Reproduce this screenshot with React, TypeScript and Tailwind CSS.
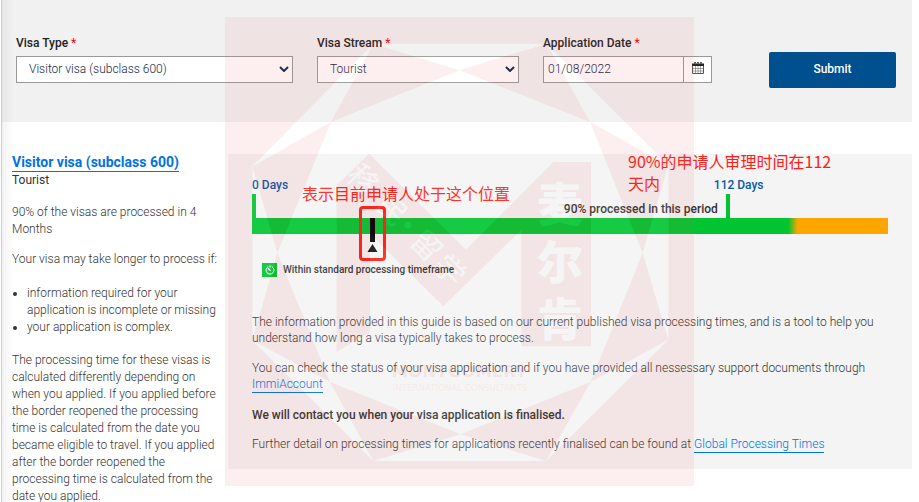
import React, { useState } from 'react';

const PROCESSED_PERCENT = 74.5;
const CURRENT_PERCENT = 18.5;

interface FieldLabelProps {
    htmlFor: string;
    children: React.ReactNode;
}

function FieldLabel({ htmlFor, children }: FieldLabelProps) {
    return (
        <label htmlFor={htmlFor} className="mb-[5px] block h-4 text-xs leading-4 font-medium text-[#222]">
            {children} <span className="font-normal text-[#f00]">*</span>
        </label>
    );
}

interface SelectFieldProps {
    id: string;
    label: string;
    options: string[];
}

function SelectField({ id, label, options }: SelectFieldProps) {
    const [value, setValue] = useState(options[0]);

    return (
        <div className="min-w-0">
            <FieldLabel htmlFor={id}>{label}</FieldLabel>
            <div className="relative">
                <select
                    id={id}
                    value={value}
                    onChange={(e) => setValue(e.target.value)}
                    className="block h-[27px] w-full appearance-none border border-[#999] bg-white pr-6 pb-px pl-3 text-xs font-light text-[#14284b]"
                >
                    {options.map((option) => (
                        <option key={option}>{option}</option>
                    ))}
                </select>
                <svg viewBox="0 0 10 6" className="pointer-events-none absolute top-[10px] right-1 h-[6px] w-[10px]">
                    <path d="M1 1l4 4 4-4" fill="none" stroke="#14284b" strokeWidth="2" />
                </svg>
            </div>
        </div>
    );
}

function CalendarIcon() {
    return (
        <svg viewBox="0 0 12 12" className="h-3 w-3" fill="none" stroke="#555">
            <path d="M.5 3.5h11v8H.5z" fill="#fff" />
            <path d="M0 1.5h12v2.5H0z" fill="#222" stroke="none" />
            <path d="M3 0v2.5M6 0v2.5M9 0v2.5" stroke="#222" strokeWidth="1.6" />
            <path d="M3 .6v1.6M6 .6v1.6M9 .6v1.6" stroke="#fff" strokeWidth=".5" />
            <path d="M3.5 4v7.5M6 4v7.5M8.5 4v7.5M.5 6.5h11M.5 9h11" strokeWidth=".5" />
        </svg>
    );
}

function ProcessingForm() {
    const [date, setDate] = useState('01/08/2022');

    return (
        <form
            className="grid h-[122px] grid-cols-[277fr_202fr_169fr_160fr] items-start gap-6 bg-[#f1f1f1] pt-[35px] pr-4 pl-[15px]"
            onSubmit={(e) => e.preventDefault()}
        >
            <SelectField id="visa-type" label="Visa Type" options={['Visitor visa (subclass 600)', 'Student visa (subclass 500)']} />
            <SelectField id="visa-stream" label="Visa Stream" options={['Tourist', 'Business Visitor']} />
            <div className="min-w-0">
                <FieldLabel htmlFor="application-date">Application Date</FieldLabel>
                <div className="flex h-[27px] border border-[#999] bg-white">
                    <input
                        id="application-date"
                        type="text"
                        value={date}
                        onChange={(e) => setDate(e.target.value)}
                        className="w-full min-w-0 flex-1 px-1 pb-px text-xs font-light text-[#14284b]"
                    />
                    <button
                        type="button"
                        aria-label="Choose date"
                        className="flex w-7 shrink-0 items-center justify-center border-l border-[#999] pb-[3px]"
                    >
                        <CalendarIcon />
                    </button>
                </div>
            </div>
            <div className="min-w-0 pt-[17px] pl-[33px]">
                <button type="submit" className="h-9 w-full rounded-xs bg-[#00508f] pb-[3px] text-xs font-medium text-white">
                    Submit
                </button>
            </div>
        </form>
    );
}

function Sidebar() {
    return (
        <aside className="w-[210px] shrink-0 text-xs leading-[17px] font-light text-[#333]">
            <h2 className="leading-[17px]">
                <a href="#visa" className="inline-block border-b border-[#0073e0] text-sm leading-[17px] font-bold text-[#0073e0]">
                    Visitor visa (subclass 600)
                </a>
            </h2>
            <p className="font-normal">Tourist</p>
            <p className="mt-[15px]">90% of the visas are processed in 4 Months</p>
            <p className="mt-[13px]">Your visa may take longer to process if:</p>
            <ul className="mt-[17px] list-disc pl-[15px]">
                <li>information required for your application is incomplete or missing</li>
                <li>your application is complex.</li>
            </ul>
            <p className="mt-4">
                The processing time for these visas is calculated differently depending on when you applied. If you applied before the
                border reopened the processing time is calculated from the date you became eligible to travel. If you applied after the
                border reopened the processing time is calculated from the date you applied.
            </p>
        </aside>
    );
}

function Timeline() {
    return (
        <div className="relative h-20">
            <span className="absolute top-0 left-0 text-xs leading-4 font-medium text-[#0b57a8]">0 Days</span>
            <span
                className="absolute top-0 -ml-3 text-xs leading-4 font-medium text-[#0b57a8]"
                style={{ left: `${PROCESSED_PERCENT}%` }}
            >
                112 Days
            </span>
            <span
                className="absolute top-6 mr-2 text-xs leading-4 font-medium whitespace-nowrap text-[#333]"
                style={{ right: `${100 - PROCESSED_PERCENT}%` }}
            >
                90% processed in this period
            </span>
            <div className="absolute top-[17px] left-0 h-6 w-1 bg-[#00c531]" />
            <div className="absolute top-[17px] h-6 w-1 bg-[#00c531]" style={{ left: `${PROCESSED_PERCENT}%` }} />
            <div className="absolute inset-x-0 top-[41px] h-4 bg-[linear-gradient(to_right,#00c531_84.3%,#ffa500_85.8%)]" />

            {/* Current application */}
            <div className="absolute top-[41px] h-6 w-[5px] bg-black" style={{ left: `${CURRENT_PERCENT}%` }} />
            <svg viewBox="0 0 10 8" className="absolute top-[67px] -ml-[3px] h-2 w-[11px]" style={{ left: `${CURRENT_PERCENT}%` }}>
                <path d="M5 0l5 8H0z" fill="#111" />
            </svg>
            <div
                className="absolute top-[29px] -ml-[11px] h-[55px] w-[27px] rounded-sm border-3 border-[#ff2015]"
                style={{ left: `${CURRENT_PERCENT}%` }}
            />
            <span className="absolute top-[5px] left-[50px] font-['Noto_Sans_CJK_SC',sans-serif] text-base leading-[22px] font-normal whitespace-nowrap text-[#ff2015]">
                表示目前申请人处于这个位置
            </span>
            <span className="absolute -top-[27px] left-[376px] w-[210px] font-['Noto_Sans_CJK_SC',sans-serif] text-base leading-[22px] font-normal text-[#ff2015]">
                90%的申请人审理时间在112
                <br />
                天内
            </span>
        </div>
    );
}

function TextLink({ href, children }: { href: string; children: React.ReactNode }) {
    return (
        <a href={href} className="inline-block border-b border-[#0073e0] leading-4 text-[#0073e0]">
            {children}
        </a>
    );
}

function GuidePanel() {
    return (
        <main className="min-w-0 flex-1 self-start bg-[#f4f4f4] px-6 pt-[23px] pb-4 text-xs leading-4 font-light text-[#333]">
            <Timeline />
            <div className="mt-[6px] flex h-[14px] items-center gap-[6px] pl-[10px]">
                <span className="flex h-[14px] w-[15px] items-center justify-center bg-[#00c531]">
                    <svg viewBox="0 0 10 10" className="h-[10px] w-[10px]" fill="none" stroke="#fff" strokeLinecap="round">
                        <path d="M3 1.6A4 4 0 1 0 7 1.6M5 .8v1.4" />
                        <path d="M5 5.2L3.2 3.4" strokeWidth="1.4" />
                    </svg>
                </span>
                <span className="text-[10px] leading-[14px] font-medium">Within standard processing timeframe</span>
            </div>
            <p className="mt-[37px]">
                The information provided in this guide is based on our current published visa processing times, and is a tool to help you
                understand how long a visa typically takes to process.
            </p>
            <p className="mt-[14px]">
                You can check the status of your visa application and if you have provided all nessessary support documents through{' '}
                <TextLink href="#immiaccount">ImmiAccount</TextLink>
            </p>
            <p className="mt-[14px] font-medium">We will contact you when your visa application is finalised.</p>
            <p className="mt-[13px]">
                Further detail on processing times for applications recently finalised can be found at{' '}
                <TextLink href="#global">Global Processing Times</TextLink>
            </p>
        </main>
    );
}

const TINT = '#ee5c5c';

function Watermark() {
    return (
        <svg
            viewBox="15 20 1407 1407"
            className="pointer-events-none absolute top-[17px] left-[225px] h-[469px] w-[469px]"
            aria-hidden="true"
        >
            <g opacity=".09">
                <path d="M15 20h1407v1407H15z" fill={TINT} />
                <path d="M460 100H980L1345 465V988L978 1352H460L97 990V468z" fill="#fff" />
                {/* Facets at the corners of the octagon */}
                <g fill={TINT}>
                    <path d="M460 100L718 180 333 335z" />
                    <path d="M980 100L1110 335 718 180z" />
                    <path d="M1345 465L1268 728 1110 335z" />
                    <path d="M1345 988L1112 1115 1268 728z" />
                    <path d="M978 1352L722 1272 1112 1115z" />
                    <path d="M460 1352L330 1115 722 1272z" />
                    <path d="M97 990L172 728 330 1115z" />
                    <path d="M97 468L333 335 172 728z" />
                    <path d="M350 525L447 430 738 718 1000 455H1113V1008H904V658L670 888 450 670V965L350 1025z" />
                </g>
                <g fill="#fff" textAnchor="middle" className="font-['Noto_Sans_CJK_SC',sans-serif]">
                    <g fontSize="138" fontWeight="900">
                        <text x="1020" y="633">麦</text>
                        <text x="1020" y="806">尔</text>
                        <text x="1020" y="978">肯</text>
                    </g>
                    <g fontSize="90" transform="translate(430 510) rotate(46)">
                        <text x="0" y="32">移</text>
                        <text x="124" y="32">民</text>
                        <text x="190" y="32">·</text>
                        <text x="272" y="32">留</text>
                        <text x="374" y="32">学</text>
                    </g>
                </g>
                <g fill={TINT} textAnchor="middle" className="font-['DejaVu_Sans',sans-serif]">
                    <text x="718" y="1101" fontSize="50" fontWeight="700">MONTGOMERY</text>
                    <text x="720" y="1142" fontSize="26" opacity=".7">INTERNATIONAL CONSULTANTS</text>
                </g>
            </g>
        </svg>
    );
}

export default function App() {
    return (
        <div className="relative min-h-screen overflow-hidden bg-white pr-[7px] pl-px font-['Roboto',sans-serif]">
            <div className="relative">
                <ProcessingForm />
                <div className="flex gap-[6px] pt-8 pl-[11px]">
                    <Sidebar />
                    <GuidePanel />
                </div>
                <div className="pointer-events-none absolute inset-y-0 left-0 w-3 border-l border-[#ccc] bg-linear-to-r from-black/5 to-transparent" />
            </div>
            <Watermark />
        </div>
    );
}
